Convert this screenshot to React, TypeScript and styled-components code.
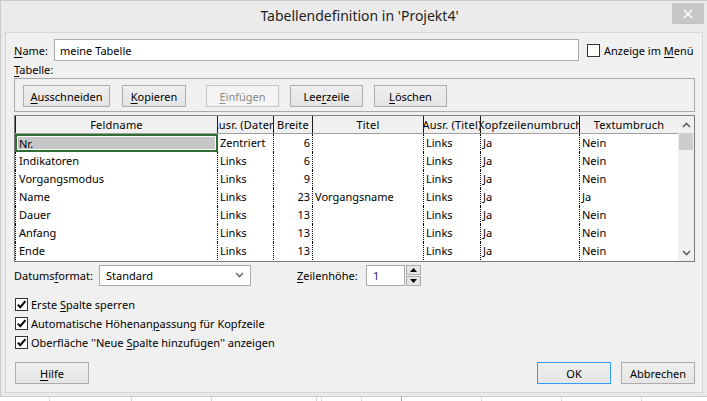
import React from "react";
import styled, { createGlobalStyle, css } from "styled-components";

const GlobalStyle = createGlobalStyle`
  html, body {
    margin: 0;
    padding: 0;
  }
  body {
    width: 707px;
    height: 401px;
    overflow: hidden;
    background: #ffffff;
    font-family: "Noto Sans", "Open Sans", sans-serif;
    font-size: 11px;
    color: #000;
  }
  * {
    box-sizing: border-box;
  }
  u {
    text-decoration-thickness: 1px;
    text-underline-offset: 2px;
  }
`;

const COLS = "203px 56px 39px 111px 57px 99px 98px";

type Row = {
  feld: string;
  ausrDaten: string;
  breite: number;
  titel: string;
  ausrTitel: string;
  kopf: string;
  text: string;
};

const rows: Row[] = [
  { feld: "Nr.", ausrDaten: "Zentriert", breite: 6, titel: "", ausrTitel: "Links", kopf: "Ja", text: "Nein" },
  { feld: "Indikatoren", ausrDaten: "Links", breite: 6, titel: "", ausrTitel: "Links", kopf: "Ja", text: "Nein" },
  { feld: "Vorgangsmodus", ausrDaten: "Links", breite: 9, titel: "", ausrTitel: "Links", kopf: "Ja", text: "Nein" },
  { feld: "Name", ausrDaten: "Links", breite: 23, titel: "Vorgangsname", ausrTitel: "Links", kopf: "Ja", text: "Ja" },
  { feld: "Dauer", ausrDaten: "Links", breite: 13, titel: "", ausrTitel: "Links", kopf: "Ja", text: "Nein" },
  { feld: "Anfang", ausrDaten: "Links", breite: 13, titel: "", ausrTitel: "Links", kopf: "Ja", text: "Nein" },
  { feld: "Ende", ausrDaten: "Links", breite: 13, titel: "", ausrTitel: "Links", kopf: "Ja", text: "Nein" },
];

const headers = [
  "Feldname",
  "Ausr. (Daten)",
  "Breite",
  "Titel",
  "Ausr. (Titel)",
  "Kopfzeilenumbruch",
  "Textumbruch",
];

const backdropCols = [50, 82, 80, 105, 5, 40, 40, 80, 80, 80, 80, 65];

export default function App() {
  return (
    <>
      <GlobalStyle />
      <Window>
        <TitleBar>
          <span />
          <Title>Tabellendefinition in 'Projekt4'</Title>
          <CloseButton>
            <svg width="10" height="10" viewBox="0 0 10 10">
              <path d="M1 1 L9 9 M9 1 L1 9" stroke="#fff" strokeWidth="1.6" />
            </svg>
          </CloseButton>
        </TitleBar>

        <Client>
          <NameRow>
            <NameLabel>
              <u>N</u>ame:
            </NameLabel>
            <TextBox $w={525}>meine Tabelle</TextBox>
            <CheckLabel $ml={8} $gap={4}>
              <CheckBox />
              <span>
                Anzeige im <u>M</u>enü
              </span>
            </CheckLabel>
          </NameRow>

          <SectionLabel>
            <u>T</u>abelle:
          </SectionLabel>

          <GroupBox>
            <Button $w={87}>
              <u>A</u>usschneiden
            </Button>
            <Button $w={64} $ml={12}>
              <u>K</u>opieren
            </Button>
            <Button $w={73} $ml={20} disabled>
              <u>E</u>infügen
            </Button>
            <Button $w={73} $ml={11}>
              Lee<u>r</u>zeile
            </Button>
            <Button $w={73} $ml={11}>
              <u>L</u>öschen
            </Button>
          </GroupBox>

          <Table>
            <Grid>
              <HeaderRow>
                {headers.map((h, i) => (
                  <HeadCell key={h} $first={i === 0} $last={i === headers.length - 1}>
                    <span>{h}</span>
                  </HeadCell>
                ))}
              </HeaderRow>
              {rows.map((r, i) => (
                <BodyRow key={r.feld}>
                  <Cell $first $selected={i === 0}>
                    {r.feld}
                  </Cell>
                  <Cell>{r.ausrDaten}</Cell>
                  <Cell $right>{r.breite}</Cell>
                  <Cell>{r.titel}</Cell>
                  <Cell>{r.ausrTitel}</Cell>
                  <Cell>{r.kopf}</Cell>
                  <Cell $last>{r.text}</Cell>
                </BodyRow>
              ))}
            </Grid>
            <ScrollBar>
              <ScrollArrow>
                <svg width="9" height="6" viewBox="0 0 9 6">
                  <path d="M1 5 L4.5 1.5 L8 5" fill="none" stroke="#606060" strokeWidth="1.6" />
                </svg>
              </ScrollArrow>
              <Thumb />
              <Track />
              <ScrollArrow>
                <svg width="9" height="6" viewBox="0 0 9 6">
                  <path d="M1 1 L4.5 4.5 L8 1" fill="none" stroke="#606060" strokeWidth="1.6" />
                </svg>
              </ScrollArrow>
            </ScrollBar>
          </Table>

          <FormatRow>
            <FieldLabel $w={85}>
              Datums<u>f</u>ormat:
            </FieldLabel>
            <Select>
              Standard
              <svg width="9" height="6" viewBox="0 0 9 6">
                <path d="M1 1 L4.5 4.5 L8 1" fill="none" stroke="#707070" strokeWidth="1.6" />
              </svg>
            </Select>
            <FieldLabel $w={69} $ml={46}>
              <u>Z</u>eilenhöhe:
            </FieldLabel>
            <SpinBox>1</SpinBox>
            <SpinButtons>
              <SpinButton>
                <svg width="7" height="4" viewBox="0 0 7 4">
                  <path d="M0 4 L3.5 0 L7 4 Z" fill="#000" />
                </svg>
              </SpinButton>
              <SpinButton>
                <svg width="7" height="4" viewBox="0 0 7 4">
                  <path d="M0 0 L3.5 4 L7 0 Z" fill="#000" />
                </svg>
              </SpinButton>
            </SpinButtons>
          </FormatRow>

          <Options>
            <CheckLabel $ml={1} $gap={3}>
              <CheckBox $checked />
              <span>
                Erste <u>S</u>palte sperren
              </span>
            </CheckLabel>
            <CheckLabel $ml={1} $gap={3}>
              <CheckBox $checked />
              <span>
                Automatische Höhenan<u>p</u>assung für Kopfzeile
              </span>
            </CheckLabel>
            <CheckLabel $ml={1} $gap={3}>
              <CheckBox $checked />
              <span>
                Oberfläche ''Neue <u>S</u>palte hinzufügen'' anzeigen
              </span>
            </CheckLabel>
          </Options>

          <Footer>
            <Button $w={74} $ml={1}>
              <u>H</u>ilfe
            </Button>
            <FooterRight>
              <Button $w={74} $primary>
                OK
              </Button>
              <Button $w={74}>Abbrechen</Button>
            </FooterRight>
          </Footer>
        </Client>
      </Window>
      <Backdrop>
        {backdropCols.map((w, i) => (
          <BackdropCell key={i} $w={w} $green={i === 6} />
        ))}
      </Backdrop>
    </>
  );
}

function CheckBox({ $checked = false }: { $checked?: boolean }) {
  return (
    <Box>
      {$checked && (
        <svg width="11" height="11" viewBox="0 0 11 11">
          <path d="M1.8 5.6 L4.3 8.2 L9.4 2.2" fill="none" stroke="#000" strokeWidth="2" />
        </svg>
      )}
    </Box>
  );
}

const Window = styled.div`
  width: 712px;
  height: 397px;
  background: #ebebeb;
  border-top: 1px solid #c9c9c9;
  border-left: 1px solid #c9c9c9;
  border-bottom: 1px solid #c9c9c9;
  display: flex;
  flex-direction: column;
`;

const TitleBar = styled.div`
  height: 31px;
  display: grid;
  grid-template-columns: 1fr auto 1fr;
  align-items: start;
`;

const Title = styled.div`
  margin-top: 5px;
  font-size: 14px;
  letter-spacing: 0;
  color: #1e1e1e;
  white-space: nowrap;
  padding-left: 6px;
`;

const CloseButton = styled.div`
  justify-self: end;
  margin: 2px 8px 0 0;
  width: 32px;
  height: 21px;
  background: #c7c7c7;
  display: flex;
  align-items: center;
  justify-content: center;
`;

const Client = styled.div`
  margin-left: 4px;
  width: 698px;
  height: 361px;
  background: #f0f0f0;
  border: 1px solid #d6d6d6;
  padding: 6px 7px 0 8px;
  display: flex;
  flex-direction: column;
`;

const NameRow = styled.div`
  display: flex;
  align-items: center;
  height: 22px;
`;

const NameLabel = styled.div`
  width: 40px;
  white-space: nowrap;
`;

const TextBox = styled.div<{ $w: number }>`
  width: ${(p) => p.$w}px;
  height: 22px;
  background: #fff;
  border: 1px solid #ababab;
  padding-left: 5px;
  display: flex;
  align-items: center;
  white-space: nowrap;
`;

const CheckLabel = styled.div<{ $ml?: number; $gap: number }>`
  display: flex;
  align-items: center;
  gap: ${(p) => p.$gap}px;
  margin-left: ${(p) => p.$ml ?? 0}px;
  white-space: nowrap;
  height: 19px;
`;

const Box = styled.div`
  width: 13px;
  height: 13px;
  border: 1px solid #333;
  background: #fff;
  display: flex;
  align-items: center;
  justify-content: center;
  flex-shrink: 0;
`;

const SectionLabel = styled.div`
  height: 17px;
  line-height: 16px;
  padding-top: 1px;
`;

const GroupBox = styled.div`
  height: 34px;
  border: 1px solid #a9a9a9;
  padding: 6px 0 0 8px;
  display: flex;
  align-items: flex-start;
`;

const Button = styled.button<{ $w: number; $ml?: number; $primary?: boolean }>`
  width: ${(p) => p.$w}px;
  height: 22px;
  margin: 0 0 0 ${(p) => p.$ml ?? 0}px;
  padding: 0;
  font: inherit;
  color: #000;
  background: linear-gradient(#efefef, #e5e5e5);
  border: 1px solid #acacac;
  border-radius: 0;
  white-space: nowrap;
  ${(p) =>
    p.$primary &&
    css`
      border-color: #3399ff;
    `}
  &:disabled {
    background: #f4f4f4;
    border-color: #c6c6c6;
    color: #8a8a8a;
  }
`;

const Table = styled.div`
  margin-top: 3px;
  width: 681px;
  height: 147px;
  border: 1px solid #7a7a7a;
  border-top-color: #828282;
  background: #fff;
  display: flex;
`;

const Grid = styled.div`
  width: 663px;
  display: flex;
  flex-direction: column;
  overflow: hidden;
`;

const HeaderRow = styled.div`
  display: grid;
  grid-template-columns: ${COLS};
  height: 18px;
  background: #f0f0f0;
  border-bottom: 1px solid #a0a0a0;
  flex-shrink: 0;
`;

const HeadCell = styled.div<{ $first?: boolean; $last?: boolean }>`
  display: flex;
  justify-content: center;
  align-items: center;
  overflow: hidden;
  white-space: nowrap;
  line-height: 16px;
  letter-spacing: 0.2px;
  border-right: ${(p) => (p.$last ? "none" : "1px solid #1a1a1a")};
  border-left: ${(p) => (p.$first ? "1px solid #1a1a1a" : "none")};
  & > span {
    flex-shrink: 0;
  }
`;

const BodyRow = styled.div`
  display: grid;
  grid-template-columns: ${COLS};
  height: 18px;
  flex-shrink: 0;
`;

const Cell = styled.div<{ $first?: boolean; $last?: boolean; $right?: boolean; $selected?: boolean }>`
  height: 18px;
  line-height: 17px;
  overflow: hidden;
  white-space: nowrap;
  padding: 0 2px 0 ${(p) => (p.$first ? 3 : 2)}px;
  text-align: ${(p) => (p.$right ? "right" : "left")};
  border-right: ${(p) => (p.$last ? "none" : "1px dotted #000")};
  border-left: ${(p) => (p.$first ? "1px dotted #000" : "none")};
  ${(p) =>
    p.$selected &&
    css`
      border: 2px solid #2f6e31;
      background: #c6c6c6;
      box-shadow: inset 0 0 0 1px #fafafa;
      padding-left: 2px;
      line-height: 15px;
    `}
`;

const ScrollBar = styled.div`
  width: 16px;
  background: #f0f0f0;
  display: flex;
  flex-direction: column;
`;

const ScrollArrow = styled.div`
  height: 17px;
  display: flex;
  align-items: center;
  justify-content: center;
  flex-shrink: 0;
`;

const Thumb = styled.div`
  height: 17px;
  margin: 0 1px;
  background: #cdcdcd;
  flex-shrink: 0;
`;

const Track = styled.div`
  flex: 1;
`;

const FormatRow = styled.div`
  margin-top: 2px;
  height: 22px;
  display: flex;
  align-items: center;
`;

const FieldLabel = styled.div<{ $w: number; $ml?: number }>`
  width: ${(p) => p.$w}px;
  margin-left: ${(p) => p.$ml ?? 0}px;
  white-space: nowrap;
`;

const Select = styled.div`
  width: 152px;
  height: 21px;
  background: #fff;
  border: 1px solid #ababab;
  padding: 0 6px 0 6px;
  display: flex;
  align-items: center;
  justify-content: space-between;
`;

const SpinBox = styled.div`
  width: 39px;
  height: 21px;
  background: #fff;
  border: 1px solid #ababab;
  padding-left: 6px;
  display: flex;
  align-items: center;
  color: #2a1560;
`;

const SpinButtons = styled.div`
  margin-left: 1px;
  display: flex;
  flex-direction: column;
  gap: 1px;
`;

const SpinButton = styled.div`
  width: 15px;
  height: 10px;
  background: #e5e5e5;
  border: 1px solid #acacac;
  display: flex;
  align-items: center;
  justify-content: center;
`;

const Options = styled.div`
  margin-top: 9px;
  display: flex;
  flex-direction: column;
`;

const Footer = styled.div`
  margin-top: 10px;
  display: flex;
  justify-content: space-between;
`;

const FooterRight = styled.div`
  display: flex;
  gap: 10px;
`;

const Backdrop = styled.div`
  height: 4px;
  display: flex;
  background: #fff;
`;

const BackdropCell = styled.div<{ $w: number; $green?: boolean }>`
  width: ${(p) => p.$w}px;
  flex-shrink: 0;
  border-right: 1px solid ${(p) => (p.$green ? "#7fb47f" : "#d4d4d4")};
`;
